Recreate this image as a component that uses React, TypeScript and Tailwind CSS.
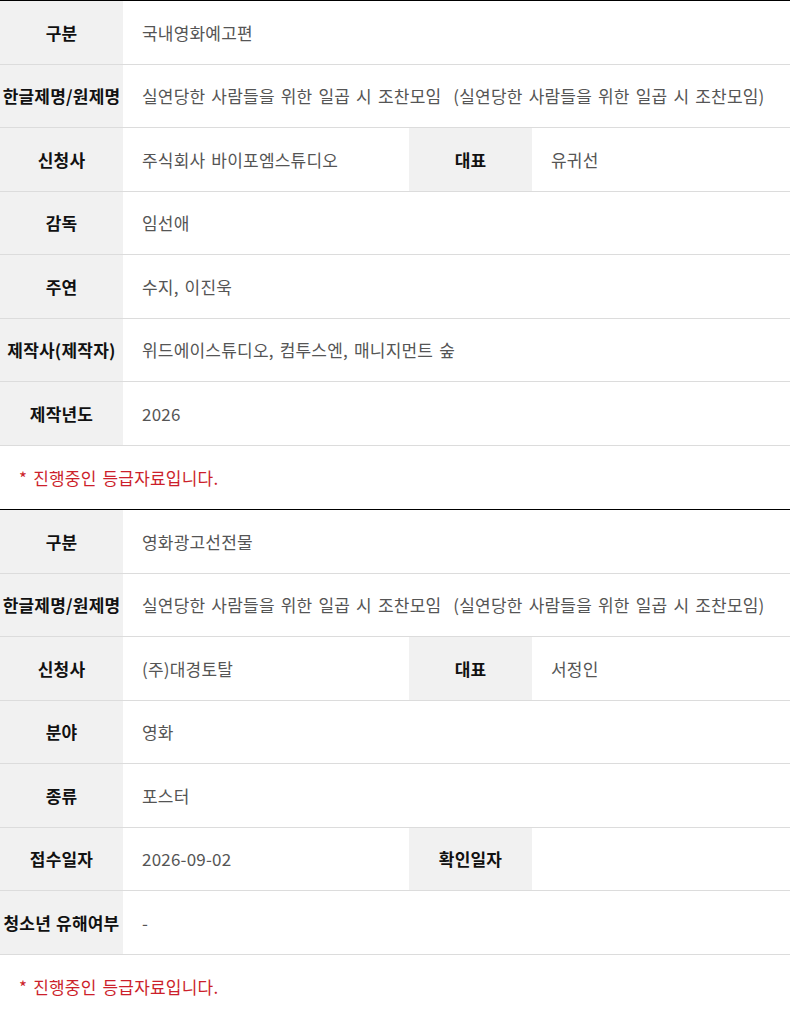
type Cell = { label: string; value: string };
type Row = Cell[];

const first: Row[] = [
  [{ label: "구분", value: "국내영화예고편" }],
  [
    {
      label: "한글제명/원제명",
      value: "실연당한 사람들을 위한 일곱 시 조찬모임  (실연당한 사람들을 위한 일곱 시 조찬모임)",
    },
  ],
  [
    { label: "신청사", value: "주식회사 바이포엠스튜디오" },
    { label: "대표", value: "유귀선" },
  ],
  [{ label: "감독", value: "임선애" }],
  [{ label: "주연", value: "수지, 이진욱" }],
  [{ label: "제작사(제작자)", value: "위드에이스튜디오, 컴투스엔, 매니지먼트 숲" }],
  [{ label: "제작년도", value: "2026" }],
];

const second: Row[] = [
  [{ label: "구분", value: "영화광고선전물" }],
  [
    {
      label: "한글제명/원제명",
      value: "실연당한 사람들을 위한 일곱 시 조찬모임  (실연당한 사람들을 위한 일곱 시 조찬모임)",
    },
  ],
  [
    { label: "신청사", value: "(주)대경토탈" },
    { label: "대표", value: "서정인" },
  ],
  [{ label: "분야", value: "영화" }],
  [{ label: "종류", value: "포스터" }],
  [
    { label: "접수일자", value: "2026-09-02" },
    { label: "확인일자", value: "" },
  ],
  [{ label: "청소년 유해여부", value: "-" }],
];

function InfoTable({ rows }: { rows: Row[] }) {
  return (
    <section className="border-t border-black">
      {rows.map((row, i) => (
        <div key={i} className="flex h-[63.5px] border-b border-[#dcdcdc]">
          {row.map((cell, j) => (
            <div key={j} className={row.length > 1 && j === 0 ? "flex w-[409px]" : "flex flex-1"}>
              <div className="flex w-[123px] shrink-0 items-center justify-center whitespace-nowrap bg-[#f1f1f1] text-[17px] font-bold tracking-[0.2px] text-[#111] [word-spacing:1px]">
                {cell.label}
              </div>
              <div className="flex flex-1 items-center whitespace-pre pl-[19px] text-[17px] tracking-[0.2px] text-[#555] [word-spacing:2px]">
                {cell.value}
              </div>
            </div>
          ))}
        </div>
      ))}
      <div className="flex h-[63.5px] items-center pl-[19px] text-[17px] tracking-[0.2px] text-[#cc1f2b] [word-spacing:2px]">
        * 진행중인 등급자료입니다.
      </div>
    </section>
  );
}

export default function App() {
  return (
    <div
      className="w-[790px] bg-white"
      style={{ fontFamily: '"Noto Sans CJK KR", "Noto Sans", sans-serif' }}
    >
      <InfoTable rows={first} />
      <InfoTable rows={second} />
    </div>
  );
}
